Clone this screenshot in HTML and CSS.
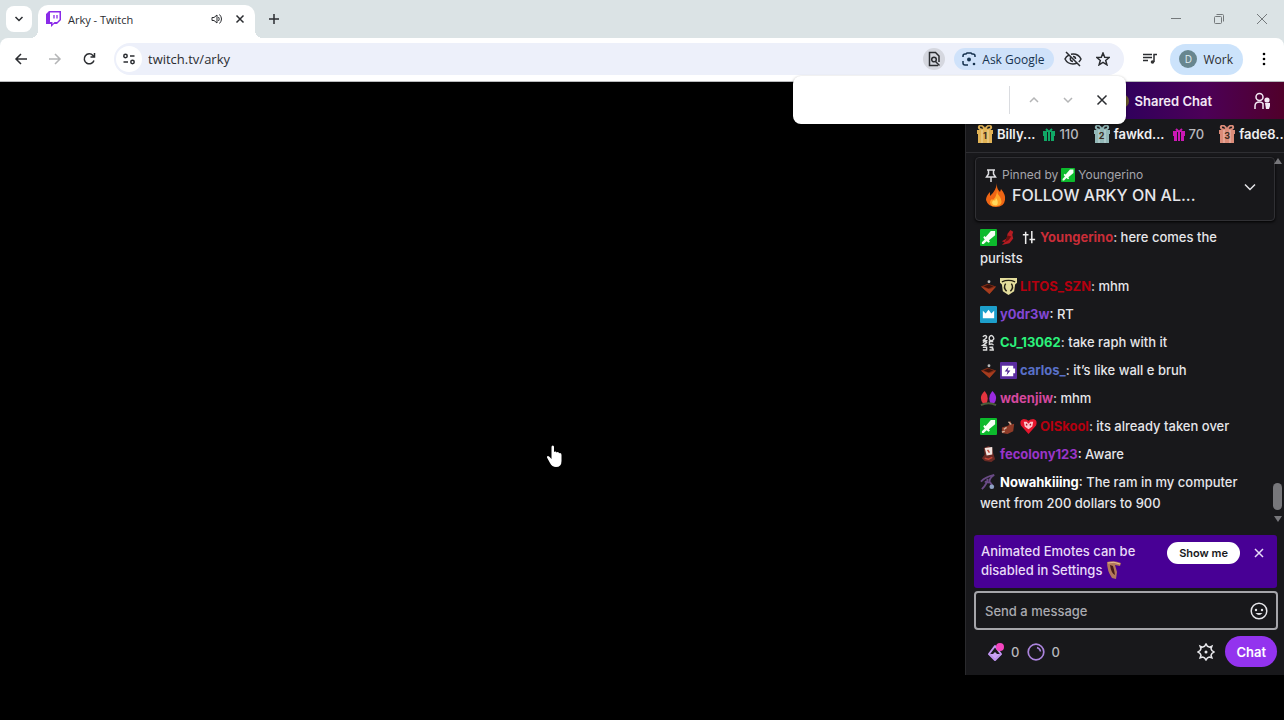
FILE: index.html
```html
<!DOCTYPE html>
<html lang="en">
<head>
<meta charset="utf-8">
<title>Arky - Twitch</title>
<link rel="stylesheet" href="styles.css">
</head>
<body>
<svg class="defs" aria-hidden="true">
  <symbol id="sword" viewBox="0 0 18 18"><rect width="18" height="18" rx="1" fill="#0cba2c"/><path d="M16 2v4.500L9.500 12l1 1.500-1.500 1-2-1.500L4 16H2v-2l3-3-1.500-2 1-1.500L6 8.500 11.500 2z" fill="#f4fff4"/></symbol>
  <symbol id="hut" viewBox="0 0 18 18"><path d="M1 9l7-3 9 3-7 8z" fill="#7e2c16"/><path d="M1 9l9 3 7-3-7 8z" fill="#a63c1e"/><path d="M4 9l5 2 5-2-5-2z" fill="#3a120b"/><circle cx="9.500" cy="4" r="1.500" fill="#bbb"/></symbol>
  <symbol id="gift" viewBox="0 0 18 18"><path d="M9 5C7-1 2 0 3 3c1 2 4 2 6 2 2 0 5 0 6-2 1-3-4-4-6 2z" fill="none" stroke="currentColor" stroke-width="2"/><path d="M1 5h16v4H1zM2 9h14v9H2z" fill="currentColor"/><path d="M6 5v13M12 5v13" stroke="#fff" stroke-opacity=".45"/></symbol>
  <symbol id="minigift" viewBox="0 0 12 13"><path d="M6 4L3 1M6 4l3-3" stroke="currentColor" stroke-width="2"/><path d="M0 3h4v10H1V8H0zM8 3h4v5h-1v5H8z" fill="currentColor"/><path d="M4 3h4v10H4z" fill="currentColor"/><path d="M4.500 4v9M7.500 4v9" stroke="#18181b"/></symbol>
</svg>

<header class="browser">
  <div class="tabstrip">
    <button class="tab-search" aria-label="Search tabs"><svg width="10" height="10" viewBox="0 0 10 10"><path d="M1.500 3L5 6.500 8.500 3" class="ln w15"/></svg></button>
    <div class="tab">
      <svg width="15" height="16" viewBox="0 0 15 16"><path d="M3 0h12v9l-4 4H8l-3 3v-3H0V3z" fill="#8a2be8"/><path d="M4 1.500h9.500v7L11 11H8.500l-2 2v-2H4z" fill="#fff"/><path d="M8 4v3.500M11 4v3.500" stroke="#8a2be8" stroke-width="1.300"/></svg>
      <span class="tab-title">Arky - Twitch</span>
      <button class="icon-btn" aria-label="Mute tab"><svg width="12" height="12" viewBox="0 0 12 12"><path d="M1 4.500v3h2L6 10V2L3 4.500z" class="ln"/><path d="M7.500 4q1.500 2 0 4M8.500 1.500q4 4.500 0 9" class="ln"/></svg></button>
      <button class="icon-btn tab-close" aria-label="Close tab"><svg width="10" height="10" viewBox="0 0 10 10"><path d="M1.500 1.500l7 7M8.500 1.500l-7 7" class="ln w15"/></svg></button>
    </div>
    <button class="icon-btn new-tab" aria-label="New tab"><svg width="12" height="12" viewBox="0 0 12 12"><path d="M6 1v10M1 6h10" class="ln w15"/></svg></button>
    <div class="window-controls">
      <button class="icon-btn" aria-label="Minimize"><svg width="12" height="12" viewBox="0 0 12 12"><path d="M1 5.500h10" class="ln"/></svg></button>
      <button class="icon-btn" aria-label="Restore"><svg width="12" height="12" viewBox="0 0 12 12"><rect x="1.500" y="3.500" width="7" height="7" rx="1" class="ln"/><path d="M3.500 1.500h6q1 0 1 1v6" class="ln"/></svg></button>
      <button class="icon-btn" aria-label="Close"><svg width="12" height="12" viewBox="0 0 12 12"><path d="M1 1l10 10M11 1L1 11" class="ln"/></svg></button>
    </div>
  </div>
  <div class="toolbar">
    <nav class="nav">
      <button class="icon-btn" aria-label="Back"><svg width="14" height="14" viewBox="0 0 14 14"><path d="M13 7H2M7 2L2 7l5 5" class="ln w15"/></svg></button>
      <button class="icon-btn faded" aria-label="Forward"><svg width="14" height="14" viewBox="0 0 14 14"><path d="M1 7h11M7 2l5 5-5 5" class="ln w15"/></svg></button>
      <button class="icon-btn" aria-label="Reload"><svg width="14" height="14" viewBox="0 0 14 14"><path d="M12 8.500A5 5 0 1 1 11 3.500L12.500 5M12.500 1v4h-4" class="ln w15"/></svg></button>
    </nav>
    <div class="omnibox">
      <button class="site-info" aria-label="Site information"><svg width="14" height="14" viewBox="0 0 14 14"><circle cx="3.500" cy="4" r="1.700" class="ln w15"/><path d="M8 4h4.500M1.500 10H6" class="ln w15"/><circle cx="10.500" cy="10" r="1.700" class="ln w15"/></svg></button>
      <input class="url" aria-label="Address" value="twitch.tv/arky">
      <button class="find-chip" aria-label="Find in page"><svg width="14" height="16" viewBox="0 0 14 16"><path d="M12 11V5L8.500 1.500h-6V14.500H11" class="ln w15"/><circle cx="7" cy="8.500" r="2.300" class="ln w15"/><path d="M8.500 10.500l4 4" class="ln w15"/></svg></button>
      <button class="ask"><svg width="14" height="14" viewBox="0 0 14 14"><path d="M1 5V4q0-2 2-2h1l1-1h4l1 1h1q2 0 2 2v1M1 9v2q0 2 2 2h3" class="ln w15"/><circle cx="7" cy="7.500" r="2" fill="#16324f"/><circle cx="12" cy="12" r="1.300" fill="#16324f"/></svg>Ask Google</button>
      <button class="icon-btn" aria-label="Tracking protection"><svg width="18" height="16" viewBox="0 0 18 16"><path d="M2 1l14 14M5 4Q2 5.500 1 8q2.500 5 8 5 2 0 3.500-.7M7 3.200Q14 2 17 8q-.8 1.700-2.200 3M6.500 6.500Q5.500 10 9 10.500M9 5.500q2.500 0 2.500 2.500" class="ln w15"/></svg></button>
      <button class="icon-btn" aria-label="Bookmark"><svg width="14" height="14" viewBox="0 0 14 14"><path d="M7 1l1.700 4.200 4.500.3-3.500 2.900 1.200 4.400L7 10.400l-3.900 2.400 1.200-4.400L.8 5.500l4.500-.3z" class="ln w15"/></svg></button>
    </div>
    <button class="icon-btn media" aria-label="Media controls"><svg width="16" height="14" viewBox="0 0 16 14"><path d="M1 2.500h9M1 5.500h9M1 8.500h5M12 10V2.500h3" class="ln w15"/><circle cx="10.500" cy="10" r="1.800" fill="#333"/></svg></button>
    <button class="profile"><span class="avatar">D</span>Work</button>
    <button class="icon-btn menu" aria-label="Menu"><svg width="4" height="14" viewBox="0 0 4 14"><circle cx="2" cy="2" r="1.300"/><circle cx="2" cy="7" r="1.300"/><circle cx="2" cy="12" r="1.300"/></svg></button>
  </div>
  <form class="findbar">
    <input class="find-input" aria-label="Find in page">
    <button type="button" class="icon-btn faded" aria-label="Previous"><svg width="12" height="12" viewBox="0 0 12 12"><path d="M2 8l4-4 4 4" class="ln w15"/></svg></button>
    <button type="button" class="icon-btn faded" aria-label="Next"><svg width="12" height="12" viewBox="0 0 12 12"><path d="M2 4l4 4 4-4" class="ln w15"/></svg></button>
    <button type="button" class="icon-btn" aria-label="Close find bar"><svg width="12" height="12" viewBox="0 0 12 12"><path d="M1.500 1.500l9 9M10.500 1.500l-9 9" class="ln w15"/></svg></button>
  </form>
</header>

<main class="page">
  <section class="video" aria-label="Video">
    <svg class="cursor" width="18" height="24" viewBox="0 0 18 24"><path d="M5.500 2q0-1.500 1.300-1.500T8 2v5l1-.5q1.200-.2 1.500 1l1.200-.4q1 0 1.300 1.200l1-.2q1.500.2 1.500 1.900v6q0 6-5.500 6-4 0-6-4L1 12.500Q.5 11 2 11q1 0 3.500 3z" fill="#fff"/></svg>
  </section>
  <aside class="chat">
    <div class="chat-head">
      <svg width="16" height="16" viewBox="0 0 16 16"><circle cx="8" cy="8" r="7" fill="#6b5a2c"/></svg>
      <h2>Shared Chat</h2>
      <button class="icon-btn" aria-label="Community"><svg width="18" height="18" viewBox="0 0 18 18"><circle cx="6.500" cy="5" r="3.500" class="ln w15"/><path d="M2 17v-3q0-4 4.500-4 2.500 0 3.500 1.500V17" class="ln w15"/><circle cx="14" cy="8" r="2.600" fill="currentColor"/><path d="M12 11h5v3l-1 3h-3z" fill="currentColor"/></svg></button>
    </div>
    <ol class="leaders">
      <li><span class="rank gold"><svg width="18" height="18"><use href="#gift"/></svg><i>1</i></span><b>Billy...</b><svg class="mini green" width="12" height="13"><use href="#minigift"/></svg><span>110</span></li>
      <li><span class="rank silver"><svg width="18" height="18"><use href="#gift"/></svg><i>2</i></span><b>fawkd...</b><svg class="mini pink" width="12" height="13"><use href="#minigift"/></svg><span>70</span></li>
      <li><span class="rank bronze"><svg width="18" height="18"><use href="#gift"/></svg><i>3</i></span><b>fade8...</b></li>
    </ol>
    <div class="chat-body">
      <article class="pinned">
        <div class="pin-text">
          <p class="pin-by"><svg width="12" height="13" viewBox="0 0 12 13"><path d="M2 1h8M3.500 1v4L1.500 8h9L8.500 5V1M6 8v5" class="ln w15"/></svg>Pinned by <svg width="14" height="14"><use href="#sword"/></svg>Youngerino</p>
          <p class="pin-msg"><svg width="22" height="26" viewBox="0 0 22 26"><path d="M12 1q-1 5 3 9l1-3q5 6 4 11-1 7-9 7T1 18q0-4 4-8v4Q11 9 12 1z" fill="#ee6514"/><path d="M12 8q0 4 3 7 3 5 0 8-4 2-8 1-4-4 0-7l1 1q4-4 4-10z" fill="#ffa528"/><path d="M11 16q3 4 1 7-4 1-5-2 0-2 2-3l1 1z" fill="#ffd95c"/></svg>FOLLOW ARKY ON AL...</p>
        </div>
        <button class="icon-btn" aria-label="Expand"><svg width="12" height="12" viewBox="0 0 12 12"><path d="M1 3.500l5 5 5-5" class="ln w15"/></svg></button>
      </article>
      <ul class="messages">
        <li><svg class="badge"><use href="#sword"/></svg><svg class="badge" viewBox="0 0 18 18"><path d="M11 1l3 2-1 3 1 4-4 5-8 2 3-3-3-1 5-3 1-5z" fill="#b51c22"/><path d="M8 7l4 1-3 4-4 2z" fill="#69100f"/></svg><svg class="badge" viewBox="0 0 18 18"><path d="M6 3v13M12.500 2v13M3 6h6M10 11h6" stroke="#eee" stroke-width="1.600"/></svg><b class="red">Youngerino</b>: here comes the purists</li>
        <li><svg class="badge"><use href="#hut"/></svg><svg class="badge" viewBox="0 0 18 18"><path d="M0 0h18v5l-2 2-1 7-6 4-6-4-1-7-2-2z" fill="#e3dd9c"/><path d="M2 4q7-3 14 0M6 6q-3 4 1 8M12 6q3 4-1 8" fill="none" stroke="#221f12" stroke-width="1.500"/></svg><b class="crimson">LITOS_SZN</b>: mhm</li>
        <li><svg class="badge" viewBox="0 0 18 18"><rect width="18" height="18" rx="1" fill="#1d9fcb"/><path d="M3 5l3 3 3-4 3 4 3-3v8H3z" fill="#fff"/></svg><b class="violet">y0dr3w</b>: RT</li>
        <li><svg class="badge" viewBox="0 0 18 18"><path d="M3 3q3-3 4 0 0 2-4 4h5M10 3q2-3 4 0t-2 4q-3 0-2-4M3 9q3-2 4 0l-4 3h4M14 8h-4v3q4-1 4 1M3 14h4v3H3M14 14h-4q4 0 4 3h-4" fill="none" stroke="#ddd" stroke-width="1.500"/></svg><b class="lime">CJ_13062</b>: take raph with it</li>
        <li><svg class="badge"><use href="#hut"/></svg><svg class="badge" viewBox="0 0 18 18"><rect width="18" height="18" rx="1" fill="#5a2ca0"/><path d="M2 4h12v3h2v5h-2v3H2z" fill="#fff"/><path d="M9 5L5 10h3l-1 4 4-5H8z" fill="#4b2391"/></svg><b class="blue">carlos_</b>: it’s like wall e bruh</li>
        <li><svg class="badge" viewBox="0 0 18 18"><path d="M5 1q5 6 2 13H3Q-2 7 5 1z" fill="#e3353f"/><path d="M13 1q7 6 2 13h-4Q8 7 13 1z" fill="#9a2be0"/><path d="M1 16q8-4 16 0" fill="none" stroke="#4b5d3b" stroke-width="2"/></svg><b class="rose">wdenjiw</b>: mhm</li>
        <li><svg class="badge"><use href="#sword"/></svg><svg class="badge" viewBox="0 0 18 18"><path d="M2 10l7-2 2-5 1 4 3-1-1 8-6 3-6-1z" fill="#8f3b28"/><path d="M9 4l3 3M4 12l3-2M2 15l3-1" stroke="#d8b29b" stroke-width="1.500"/></svg><svg class="badge" viewBox="0 0 18 18"><path d="M9 17L1 8Q-1 2 4 1q3 0 5 2 2-2 5-2 5 1 3 7z" fill="#e5162d"/><path d="M4 4h3l2 2 2-2h3l-1 5-4 3-4-3z" fill="#ffc9d0"/><path d="M7 6v2M11 6v2" stroke="#b40d22" stroke-width="1.500"/></svg><b class="crimson">OISkool</b>: its already taken over</li>
        <li><svg class="badge" viewBox="0 0 18 18"><path d="M4 2l5-2 4 2 1 6 2 6-4 3-7-1-3-3 3-4z" fill="#6a2a24"/><path d="M5 2l8-1v8l-6 1z" fill="#f2e5e0"/><path d="M8 4l2 3M5 13l4 1 4-2" stroke="#c54638" stroke-width="1.500" fill="none"/></svg><b class="purple">fecolony123</b>: Aware</li>
        <li><svg class="badge" viewBox="0 0 18 18"><path d="M1 8q5-5 14-7-5 3-5 7l3 4M8 5Q8 10 2 16M5 8l5 1" fill="none" stroke="#694a85" stroke-width="2"/><circle cx="12.500" cy="13.500" r="2.500" fill="#8fa3c5"/></svg><b class="white">Nowahkiiing</b>: The ram in my computer went from 200 dollars to 900</li>
      </ul>
      <div class="scrollbar" aria-hidden="true"><span class="arrow up"></span><span class="thumb"></span><span class="arrow down"></span></div>
    </div>
    <div class="notice">
      <p>Animated Emotes can be disabled in Settings <svg width="16" height="18" viewBox="0 0 16 18"><path d="M1 1q7-2 14 1l-1 3-5-1 2 7-1 7-4-1Q1 10 1 1z" fill="#b3785b"/><path d="M4 4q1 8 5 10-1-6-2-9z" fill="#471a19"/><path d="M2 2q6-2 12 1" stroke="#e7bd92" fill="none"/></svg></p>
      <button class="show-me">Show me</button>
      <button class="icon-btn" aria-label="Dismiss"><svg width="10" height="10" viewBox="0 0 10 10"><path d="M1 1l8 8M9 1L1 9" class="ln w15"/></svg></button>
    </div>
    <div class="composer">
      <input placeholder="Send a message" aria-label="Send a message">
      <button class="icon-btn" aria-label="Emotes"><svg width="18" height="18" viewBox="0 0 18 18"><circle cx="9" cy="9" r="7.800" class="ln w15"/><circle cx="6" cy="8" r="1.200" fill="currentColor"/><circle cx="12" cy="8" r="1.200" fill="currentColor"/><path d="M5.500 11h7q-3.500 4-7 0z" fill="currentColor"/></svg></button>
    </div>
    <footer class="chat-foot">
      <button class="points"><svg width="18" height="20" viewBox="0 0 18 20"><path d="M8 4l6 8-6 6-6-6z" fill="none" stroke="#bf94f0" stroke-width="2" stroke-linejoin="round"/><path d="M3 12h3l2-2 2 2h3l-5 5z" fill="#c9a2f5"/><circle cx="13" cy="5" r="4" fill="#f545c0"/></svg>0</button>
      <button class="points"><svg width="18" height="18" viewBox="0 0 18 18"><circle cx="9" cy="9" r="7.800" fill="none" stroke="#ab84dd" stroke-width="1.700"/><path d="M10 4.500q3 1 3.500 4" fill="none" stroke="#ab84dd" stroke-width="1.500"/></svg>0</button>
      <button class="icon-btn settings" aria-label="Chat settings"><svg width="18" height="18" viewBox="0 0 18 18"><path d="M9 1l1.500 2.300 2.200.8 2.200-1-.9 2.600.9 1.800L17 9l-2.100 1.500-.9 1.800.9 2.600-2.600-.9-1.800.9L9 17l-1.500-2.100-1.800-.9-2.600.9.9-2.600-.9-1.800L1 9l2.100-1.500.9-1.800-.9-2.600 2.200 1 2.200-.8z" class="ln w15"/><circle cx="9" cy="9" r="1.500" fill="currentColor"/></svg></button>
      <button class="send">Chat</button>
    </footer>
  </aside>
</main>
</body>
</html>
```
FILE: styles.css
```css
* { box-sizing: border-box; }
body {
  margin: 0;
  min-height: 100vh;
  display: flex;
  flex-direction: column;
  background: #000;
  font-family: Inter, "Liberation Sans", sans-serif;
  font-size: 13px;
}
h2, p, ul, ol { margin: 0; padding: 0; list-style: none; }
button, input { font: inherit; color: inherit; border: 0; padding: 0; background: none; outline: none; }
svg { flex: none; }
.defs { position: absolute; width: 0; height: 0; }
.ln { fill: none; stroke: currentColor; stroke-width: 1; }
.w15 { stroke-width: 1.500; }
.icon-btn { display: flex; align-items: center; justify-content: center; }
.faded { opacity: .35; }

/* Browser chrome */
.browser { position: relative; color: #2b2d31; font-family: "Open Sans", "Noto Sans", sans-serif; font-size: 12px; background: #dbe3e5; }
.tabstrip { display: flex; height: 38px; align-items: center; padding: 0 16px 0 6px; }
.tab-search { width: 26px; height: 26px; border-radius: 8px; background: #fff; display: grid; place-items: center; margin-right: 6px; }
.tab { position: relative; align-self: flex-end; display: flex; align-items: center; width: 217px; height: 33px; padding: 0 10px 5px 8px; border-radius: 10px 10px 0 0; background: #fff; }
.tab::before, .tab::after { content: ""; position: absolute; bottom: 0; width: 8px; height: 8px; }
.tab::before { right: 100%; background: radial-gradient(circle at 0 0, #dbe3e5 8px, #fff 8px); }
.tab::after { left: 100%; background: radial-gradient(circle at 100% 0, #dbe3e5 8px, #fff 8px); }
.tab-title { flex: 1; padding-left: 7px; font-size: 11px; }
.tab-close { margin-left: 12px; }
.new-tab { margin-left: 13px; }
.window-controls { margin-left: auto; display: flex; gap: 31px; color: #74797b; }
.toolbar { display: flex; align-items: center; height: 44px; padding: 0 18px 1px 14px; background: #fff; border-bottom: 1px solid #b9bbbd; border-radius: 8px 8px 0 0; }
.nav { display: flex; gap: 20px; }
.omnibox { flex: 1; display: flex; align-items: center; height: 32px; margin-left: 18px; padding: 0 14px 0 2px; border-radius: 16px; background: #edf0fa; }
.site-info { width: 26px; height: 26px; border-radius: 50%; background: #fff; display: grid; place-items: center; }
.url { flex: 1; min-width: 0; margin-left: 6px; font-size: 13px; }
.find-chip { width: 22px; height: 22px; border-radius: 50%; background: #d5d7df; display: grid; place-items: center; margin-right: 9px; }
.ask { display: flex; align-items: center; gap: 6px; height: 22px; padding: 0 10px 0 8px; margin-right: 10px; border-radius: 11px; background: #cfe2fa; color: #16324f; font-weight: 500; }
.omnibox .icon-btn + .icon-btn { margin-left: 14px; }
.media { margin: 0 12px 0 18px; }
.profile { display: flex; align-items: center; gap: 6px; height: 31px; padding: 0 10px 0 9px; border-radius: 16px; background: #cce3fb; }
.avatar { width: 18px; height: 18px; border-radius: 50%; background: #68868f; color: #e0eef2; font-size: 10px; line-height: 18px; }
.menu { margin-left: 19px; }
.findbar { position: absolute; z-index: 2; right: 158px; top: 76px; display: flex; align-items: center; gap: 22px; width: 333px; height: 48px; padding: 0 18px 0 8px; border-radius: 8px; background: #fff; box-shadow: 0 1px 3px #0006; }
.find-input { flex: 1; min-width: 0; height: 28px; border-right: 1px solid #dadce0; margin-right: -4px; }

/* Page */
.page { flex: 1; display: flex; }
.video { position: relative; flex: 1; background: #000; }
.cursor { position: absolute; left: 546px; top: 363px; }
.chat { width: 319px; margin-bottom: 45px; display: flex; flex-direction: column; background: #18181b; border-left: 1px solid #2a2a2d; color: #e6e6ea; font-weight: 500; }
.chat-head { display: flex; align-items: center; justify-content: flex-end; height: 37px; padding-right: 13px; background: linear-gradient(90deg, #30005c 50%, #4c0057 75%, #50002a); color: #f3e8f5; }
.chat-head h2 { margin: 0 41px 0 5px; font-size: 13px; font-weight: 600; }
.leaders { display: flex; align-items: center; gap: 14px; height: 34px; padding: 0 0 3px 10px; overflow: hidden; border-bottom: 1px solid #2e2e32; white-space: nowrap; color: #b9b9be; }
.leaders li { display: flex; align-items: center; }
.leaders b { color: #efeff1; font-weight: 600; margin-left: 3px; }
.rank { position: relative; display: flex; }
.rank i { position: absolute; left: 0; right: 0; top: 5px; text-align: center; color: #3c2c20; font-size: 9px; font-style: normal; font-weight: 700; line-height: 12px; }
.gold { color: #e2b355; }
.silver { color: #93b8b8; }
.bronze { color: #dc8c79; }
.mini { margin: 0 4px 0 8px; }
.green { color: #10a866; }
.pink { color: #cb18b4; }
.chat-body { position: relative; flex: 1; padding: 4px 9px 0; }
.pinned { display: flex; align-items: center; justify-content: space-between; height: 64px; padding: 0 18px 4px 9px; border: 1px solid #303034; border-radius: 4px; background: #18181b; box-shadow: 0 1px 3px #000; }
.pin-by { display: flex; align-items: center; gap: 3px; color: #a5a5ab; font-size: 12px; font-weight: 400; line-height: 16px; }
.pin-by svg:first-child { margin-right: 2px; color: #dedee2; }
.pin-msg { display: flex; align-items: center; gap: 5px; height: 24px; font-size: 16px; }
.messages { padding: 3px 28px 0 5px; line-height: 21px; }
.messages li { padding: 3px 0 4px; }
.messages b { font-weight: 700; }
.badge { width: 17px; height: 17px; margin-right: 3px; vertical-align: -4px; }
.red { color: #c92d38; }
.crimson { color: #b5000f; }
.violet { color: #8247d5; }
.lime { color: #2cf27b; }
.blue { color: #5870c8; }
.rose { color: #d4489e; }
.purple { color: #9a35c8; }
.white { color: #fff; }
.scrollbar { position: absolute; top: 0; right: 2px; bottom: 10px; width: 9px; display: flex; flex-direction: column; align-items: center; padding: 5px 0 3px; }
.thumb { width: 9px; height: 27px; margin: auto 0 6px; border-radius: 5px; background: #77777b; }
.arrow { border: 4px solid transparent; }
.up { border-top: 0; border-bottom: 6px solid #77777b; }
.down { border-bottom: 0; border-top: 6px solid #77777b; }
.notice { display: flex; align-items: flex-start; height: 53px; margin: 0 7px 3px 8px; padding: 7px 13px 0 7px; border-radius: 3px; background: #480095; color: #e8dcf8; line-height: 19px; }
.notice p { width: 162px; }
.notice p svg { vertical-align: -4px; }
.notice .icon-btn { height: 22px; margin-left: 14px; }
.show-me { height: 22px; padding: 0 12px; margin-left: auto; border-radius: 11px; background: #fff; color: #19191c; font-size: 11px; font-weight: 600; }
.composer { display: flex; align-items: center; height: 39px; margin: 0 6px 0 8px; padding: 0 8px 0 9px; border: 2px solid #a5a5aa; border-radius: 4px; }
.composer input { flex: 1; min-width: 0; }
.composer input::placeholder { color: #aaaab0; opacity: 1; }
.chat-foot { display: flex; align-items: center; height: 45px; padding: 0 7px 2px 21px; }
.points { display: flex; align-items: center; gap: 6px; margin-right: 8px; color: #b7b7bc; }
.settings { margin: 0 10px 0 auto; }
.send { height: 31px; padding: 0 11px; border-radius: 16px; background: #9333ee; color: #fff; font-weight: 600; }
```
